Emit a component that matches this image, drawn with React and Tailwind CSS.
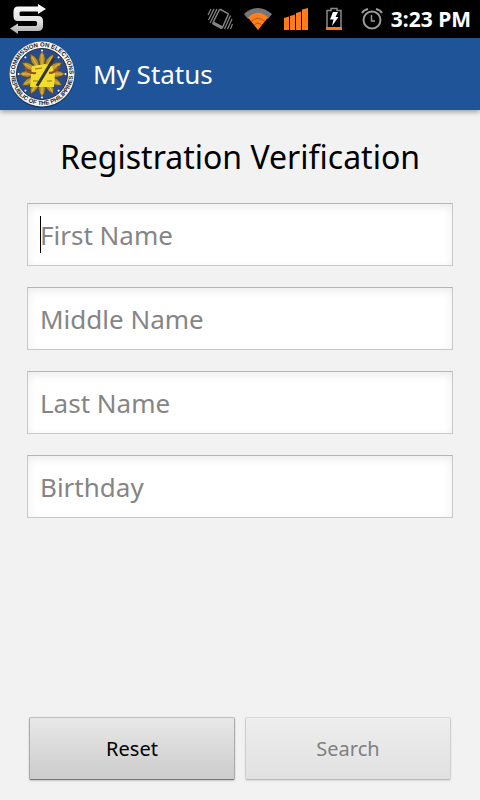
import { useState } from 'react';

const FIELDS = [
  { id: 'firstName', label: 'First Name' },
  { id: 'middleName', label: 'Middle Name' },
  { id: 'lastName', label: 'Last Name' },
  { id: 'birthday', label: 'Birthday' },
];

const PETALS = [0, 30, 60, 90, 120, 150, 180, 210, 240, 270, 300, 330];

function SyncIcon() {
  return (
    <svg viewBox="0 0 36 30" className="h-[30px] w-9" aria-hidden="true">
      <defs>
        <linearGradient id="sync" x1="0" y1="0" x2="0" y2="1">
          <stop offset="0" stopColor="#ffffff" />
          <stop offset="0.6" stopColor="#e0e0e0" />
          <stop offset="1" stopColor="#a8a8a8" />
        </linearGradient>
      </defs>
      <path
        fill="url(#sync)"
        d="M8 2.500H28V0L36 5L28 10V7.500H11Q9.500 7.500 9.500 9V10.500Q9.500 12 11 12H28Q33 12 33 17V22Q33 27 28 27H8V30L0 24.500L8 19.500V22H25Q27 22 27 20.500V18.500Q27 17 25.500 17H8Q3.500 17 3.500 12.500V7.500Q3.500 2.500 8 2.500Z"
      />
    </svg>
  );
}

function VibrateIcon() {
  return (
    <svg viewBox="0 0 26 24" className="h-6 w-[26px]" fill="none" stroke="#858585" aria-hidden="true">
      <path strokeWidth="1.5" d="M13.500 2.500L21 6.500Q21.500 7 21 8L15.500 20.500Q15 21.500 14 21L6.500 17Q5.500 16.500 6 15.500L12 3.500Q12.500 2.200 13.500 2.500Z" />
      <path strokeWidth="3" d="M6.500 16L15 20.500" />
      <path strokeWidth="1.200" d="M4 2L1 8M7 2L1.500 13M10 2L3 16M23.500 8.500L17.500 22M25 12L20.500 22M25.500 17L23.500 22" />
    </svg>
  );
}

function WifiIcon() {
  return (
    <svg viewBox="0 0 30 24" className="h-6 w-[30px]" aria-hidden="true">
      <path fill="#777777" d="M1 7Q15 -5 29 7L25 12Q15 4 5 12Z" />
      <path fill="#ff7f1f" d="M5 10.500Q15 1 25 10.500L15 23Z" />
      <g fill="none" stroke="#b5570f" strokeWidth="1">
        <path d="M8 14.500Q15 8 22 14.500" />
        <path d="M11 18.500Q15 14 19 18.500" />
      </g>
    </svg>
  );
}

function SignalIcon() {
  return (
    <svg viewBox="0 0 26 24" className="h-6 w-[26px]" fill="#ff7a18" aria-hidden="true">
      <path d="M1 11L6 9.500V23H1ZM7 9L12 7.500V23H7ZM13 6L18 4.500V23H13ZM19 2.500L25 1V23H19Z" />
    </svg>
  );
}

function BatteryIcon() {
  return (
    <svg viewBox="0 0 18 24" className="h-6 w-[18px]" aria-hidden="true">
      <path fill="none" stroke="#8b8b8b" strokeWidth="1.500" d="M2 20V3.500H6V1.500H12V3.500H16V20" />
      <path fill="#ff7a18" d="M1 20H17V23H1Z" />
      <path fill="#ffffff" d="M8 5H13L10.500 10H13.500L7 19L8.500 12.500H5Z" />
    </svg>
  );
}

function AlarmIcon() {
  return (
    <svg viewBox="0 0 22 24" className="h-6 w-[22px]" fill="none" stroke="#999999" aria-hidden="true">
      <circle cx="11" cy="13" r="8.500" strokeWidth="2" />
      <path strokeWidth="2" d="M1 6Q2.500 3 7 2M21 6Q19.500 3 15 2" />
      <path strokeWidth="1.500" d="M10.500 8V14H14" />
    </svg>
  );
}

function Seal() {
  return (
    <svg viewBox="0 0 66 70" className="h-[70px] w-[66px] shrink-0" role="img" aria-label="Commission on Elections seal">
      <defs>
        <path id="sealTop" d="M6.500 42A27.400 27.400 0 1 1 59.500 42" />
        <path id="sealBottom" d="M2 35A31 31 0 0 0 64 35" />
      </defs>
      <circle cx="33" cy="36" r="33" fill="#173b69" />
      <circle cx="33" cy="35" r="32.500" fill="#f4f4f4" />
      <circle cx="33" cy="35" r="25.500" fill="#274b8c" stroke="#222c46" strokeWidth="1" />
      {PETALS.map((deg) => (
        <g key={deg} transform={`rotate(${deg} 33 35)`}>
          <path d="M33 29Q26.500 20 33 12Q39.500 20 33 29Z" fill="#b58f2c" stroke="#5a4a22" strokeWidth="0.700" />
          <path d="M33 25V15" stroke="#d8b845" strokeWidth="1.200" />
        </g>
      ))}
      {[0, 45, 90, 135, 180, 225, 270, 315].map((deg) => (
        <circle key={deg} cx="33" cy="11.500" r="1" fill="#ffffff" transform={`rotate(${deg} 33 35)`} />
      ))}
      <path fill="#f2dc2c" d="M23 27L36 25L43 27L46 35L45 48H21L22 36Z" />
      <path fill="none" stroke="#927026" strokeWidth="1" d="M24 42H29M38 42H43M26 30L33 29" />
      <path fill="none" stroke="#9b4c22" strokeWidth="2" d="M16 29Q19 35 27 34M50 27Q47 34 40 34" />
      <path stroke="#34352c" strokeWidth="3" d="M45 19L28 47" />
      <g fill="#202020" fontFamily="Liberation Sans, sans-serif" fontSize="6" fontWeight="700">
        <text>
          <textPath href="#sealTop" startOffset="50%" textAnchor="middle">COMMISSION ON ELECTIONS</textPath>
        </text>
        <text>
          <textPath href="#sealBottom" startOffset="50%" textAnchor="middle">REPUBLIC OF THE PHILIPPINES</textPath>
        </text>
      </g>
    </svg>
  );
}

function StatusBar() {
  return (
    <div className="flex h-[38px] items-center bg-black pr-[9px] pl-2.5 text-white">
      <SyncIcon />
      <div className="ml-auto flex items-center">
        <VibrateIcon />
        <span className="ml-2.5 flex"><WifiIcon /></span>
        <span className="ml-2.5 flex"><SignalIcon /></span>
        <span className="ml-4 flex"><BatteryIcon /></span>
        <span className="ml-[18px] flex"><AlarmIcon /></span>
        <span className="ml-2 text-[21px] leading-6 font-bold">3:23 PM</span>
      </div>
    </div>
  );
}

function App() {
  const [values, setValues] = useState({ firstName: '', middleName: '', lastName: '', birthday: '' });
  const [focused, setFocused] = useState('firstName');

  const complete = FIELDS.every((field) => values[field.id].trim() !== '');

  const handleChange = (e) => {
    setValues({ ...values, [e.target.name]: e.target.value });
  };

  const handleReset = () => {
    setValues({ firstName: '', middleName: '', lastName: '', birthday: '' });
    setFocused('firstName');
  };

  return (
    <div className="flex min-h-screen flex-col bg-[#f2f2f2] font-['Noto_Sans',sans-serif]">
      <StatusBar />
      <header className="flex h-[72px] items-center gap-[18px] bg-[#1f5499] pl-[9px] text-white shadow-[0_2px_5px_rgba(0,0,0,0.35)]">
        <Seal />
        <span className="text-[26px]">My Status</span>
      </header>

      <form className="flex flex-1 flex-col px-[27px] pb-5" onSubmit={(e) => e.preventDefault()}>
        <h1 className="mt-6 text-center text-[32px] leading-[46px] text-black">Registration Verification</h1>
        <div className="mt-[23px] flex flex-col gap-[21px]">
          {FIELDS.map((field) => (
            <div key={field.id} className="relative">
              <input
                id={field.id}
                name={field.id}
                type="text"
                aria-label={field.label}
                placeholder={field.label}
                value={values[field.id]}
                onChange={handleChange}
                onFocus={() => setFocused(field.id)}
                className="block h-[63px] w-full border border-[#c8c8c8] border-t-[#b5b5b5] bg-white px-3 text-[26px] text-black shadow-[inset_0_3px_8px_rgba(0,0,0,0.08)] outline-none placeholder:text-[#858585]"
              />
              {focused === field.id && values[field.id] === '' && (
                <span className="pointer-events-none absolute top-[13px] left-[13px] h-[37px] w-px bg-black" />
              )}
            </div>
          ))}
        </div>

        <div className="mx-0.5 mt-auto flex gap-2.5">
          <button
            type="button"
            onClick={handleReset}
            className="h-[63px] flex-1 rounded-xs border border-[#aaaaaa] border-t-[#bebebe] border-b-[#777777] bg-linear-to-b from-[#e8e8e8] to-[#cccccc] text-[20px] text-black shadow-[0_1px_2px_rgba(0,0,0,0.2)]"
          >
            Reset
          </button>
          <button
            type="submit"
            disabled={!complete}
            className="h-[63px] flex-1 rounded-xs border border-[#cfcfcf] border-t-[#dadada] border-b-[#b8b8b8] bg-linear-to-b from-[#eeeeee] to-[#e1e1e1] text-[20px] text-black shadow-[0_1px_2px_rgba(0,0,0,0.1)] disabled:text-[#808080]"
          >
            Search
          </button>
        </div>
      </form>
    </div>
  );
}

export default App;
